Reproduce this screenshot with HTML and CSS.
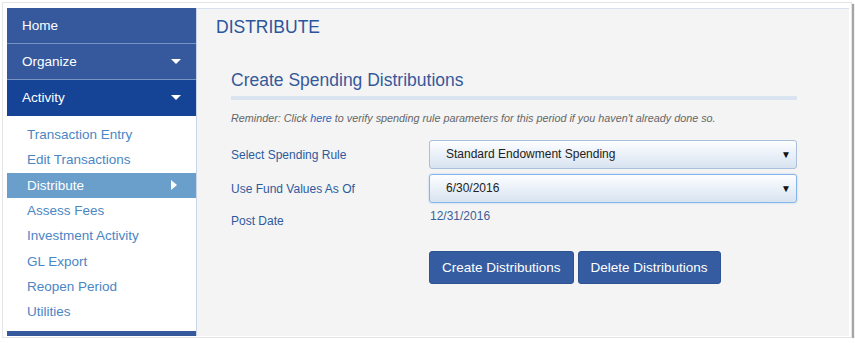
FILE: index.html
```html
<!DOCTYPE html>
<html>
<head>
<meta charset="utf-8">
<link rel="stylesheet" href="styles.css">
</head>
<body>
<div class="frame">
  <aside class="sidebar">
    <a class="nav">Home</a>
    <a class="nav">Organize <span class="caret-down"></span></a>
    <a class="nav nav-active">Activity <span class="caret-down"></span></a>
    <ul class="sub">
      <li class="sub-item">Transaction Entry</li>
      <li class="sub-item">Edit Transactions</li>
      <li class="sub-item sub-current">Distribute <span class="caret-right"></span></li>
      <li class="sub-item">Assess Fees</li>
      <li class="sub-item">Investment Activity</li>
      <li class="sub-item">GL Export</li>
      <li class="sub-item">Reopen Period</li>
      <li class="sub-item">Utilities</li>
    </ul>
    <div class="nav-cut"></div>
  </aside>
  <main class="main">
    <h1 class="page-title">DISTRIBUTE</h1>
    <section class="panel">
      <h2 class="panel-title">Create Spending Distributions</h2>
      <p class="reminder">Reminder: Click <a class="link">here</a> to verify spending rule parameters for this period if you haven't already done so.</p>
      <div class="row">
        <label class="label">Select Spending Rule</label>
        <div class="select">Standard Endowment Spending<span class="arrow">&#9660;</span></div>
      </div>
      <div class="row">
        <label class="label">Use Fund Values As Of</label>
        <div class="select select-focus">6/30/2016<span class="arrow">&#9660;</span></div>
      </div>
      <div class="row row-top">
        <label class="label label-low">Post Date</label>
        <div class="value">12/31/2016</div>
      </div>
      <div class="actions">
        <button class="btn">Create Distributions</button>
        <button class="btn">Delete Distributions</button>
      </div>
    </section>
  </main>
</div>
</body>
</html>
```
FILE: styles.css
```css
* { box-sizing: border-box; }
body {
  margin: 0;
  background: #fff;
  font-family: "Liberation Sans", Arial, sans-serif;
}
.frame {
  margin: 2px 0 0 2px;
  width: 850px;
  height: 336px;
  border: 1px solid #e4e4e4;
  padding: 5px 2px 1px 4px;
  display: flex;
  box-shadow: 2px 2px 1px rgba(0, 0, 0, 0.35);
}
.sidebar {
  width: 190px;
  flex: none;
  border-right: 1px solid #c8d5e9;
  display: flex;
  flex-direction: column;
  overflow: hidden;
  background: #fff;
}
.nav {
  display: flex;
  align-items: center;
  justify-content: space-between;
  height: 36px;
  padding: 0 15px;
  border-bottom: 1px solid #7892c4;
  background: #35599c;
  color: #fff;
  font-size: 13.5px;
}
.nav-active { background: #154396; border-bottom-color: #154396; }
.caret-down {
  width: 0; height: 0;
  border-left: 5px solid transparent;
  border-right: 5px solid transparent;
  border-top: 5px solid #fff;
}
.sub {
  list-style: none;
  margin: 0;
  padding: 6px 0 0;
}
.sub-item {
  display: flex;
  align-items: center;
  justify-content: space-between;
  height: 25.3px;
  padding: 0 19px 0 20px;
  color: #4a86c5;
  font-size: 13.5px;
}
.sub-current { background: #6a9ecb; color: #fff; }
.caret-right {
  width: 0; height: 0;
  border-top: 5px solid transparent;
  border-bottom: 5px solid transparent;
  border-left: 6px solid #fff;
}
.nav-cut {
  margin-top: auto;
  height: 5px;
  background: #35599c;
  flex: none;
}
.main {
  flex: 1;
  background: #f4f4f4;
  border-top: 1px solid #d6e0ee;
  padding: 0 0 0 19px;
}
.page-title {
  margin: 0;
  padding-top: 8px;
  font-size: 17.5px;
  line-height: 20px;
  font-weight: normal;
  color: #2b559c;
}
.panel {
  margin-left: 15px;
  width: 566px;
}
.panel-title {
  margin: 32px 0 0;
  font-size: 17.5px;
  line-height: 22px;
  font-weight: normal;
  color: #36599b;
  padding-bottom: 5px;
  border-bottom: 4px solid #dae4f1;
}
.reminder {
  margin: 11px 0 0;
  font-size: 10.8px;
  line-height: 14px;
  font-style: italic;
  color: #666;
}
.link { color: #2a62c0; }
.row {
  display: grid;
  grid-template-columns: 198px 368px;
  align-items: center;
  margin-top: 5px;
}
.reminder + .row { margin-top: 15px; }
.row-top { align-items: start; }
.label {
  font-size: 12px;
  line-height: 16px;
  color: #2f5a9d;
}
.label-low { padding-top: 5px; }
.select {
  position: relative;
  height: 29px;
  line-height: 27px;
  border: 1px solid #a9bfdc;
  border-radius: 3px;
  background: linear-gradient(#fdfeff, #d8e3f1);
  padding-left: 16px;
  font-size: 12px;
  color: #222;
}
.select-focus {
  border-color: #86b4e6;
  box-shadow: 0 0 2px #a5c8ef;
}
.arrow {
  position: absolute;
  right: 5px;
  top: 0;
  font-size: 10px;
  color: #111;
}
.value {
  font-size: 12px;
  line-height: 16px;
  color: #3a5f98;
  padding-left: 1px;
}
.actions {
  margin: 22px 0 0 198px;
  display: flex;
  gap: 4px;
}
.btn {
  height: 33px;
  padding: 0 12px;
  border: 1px solid #2f5391;
  border-radius: 3px;
  background: #355ca0;
  color: #fff;
  font-family: "Liberation Sans", Arial, sans-serif;
  font-size: 13.5px;
}
```
